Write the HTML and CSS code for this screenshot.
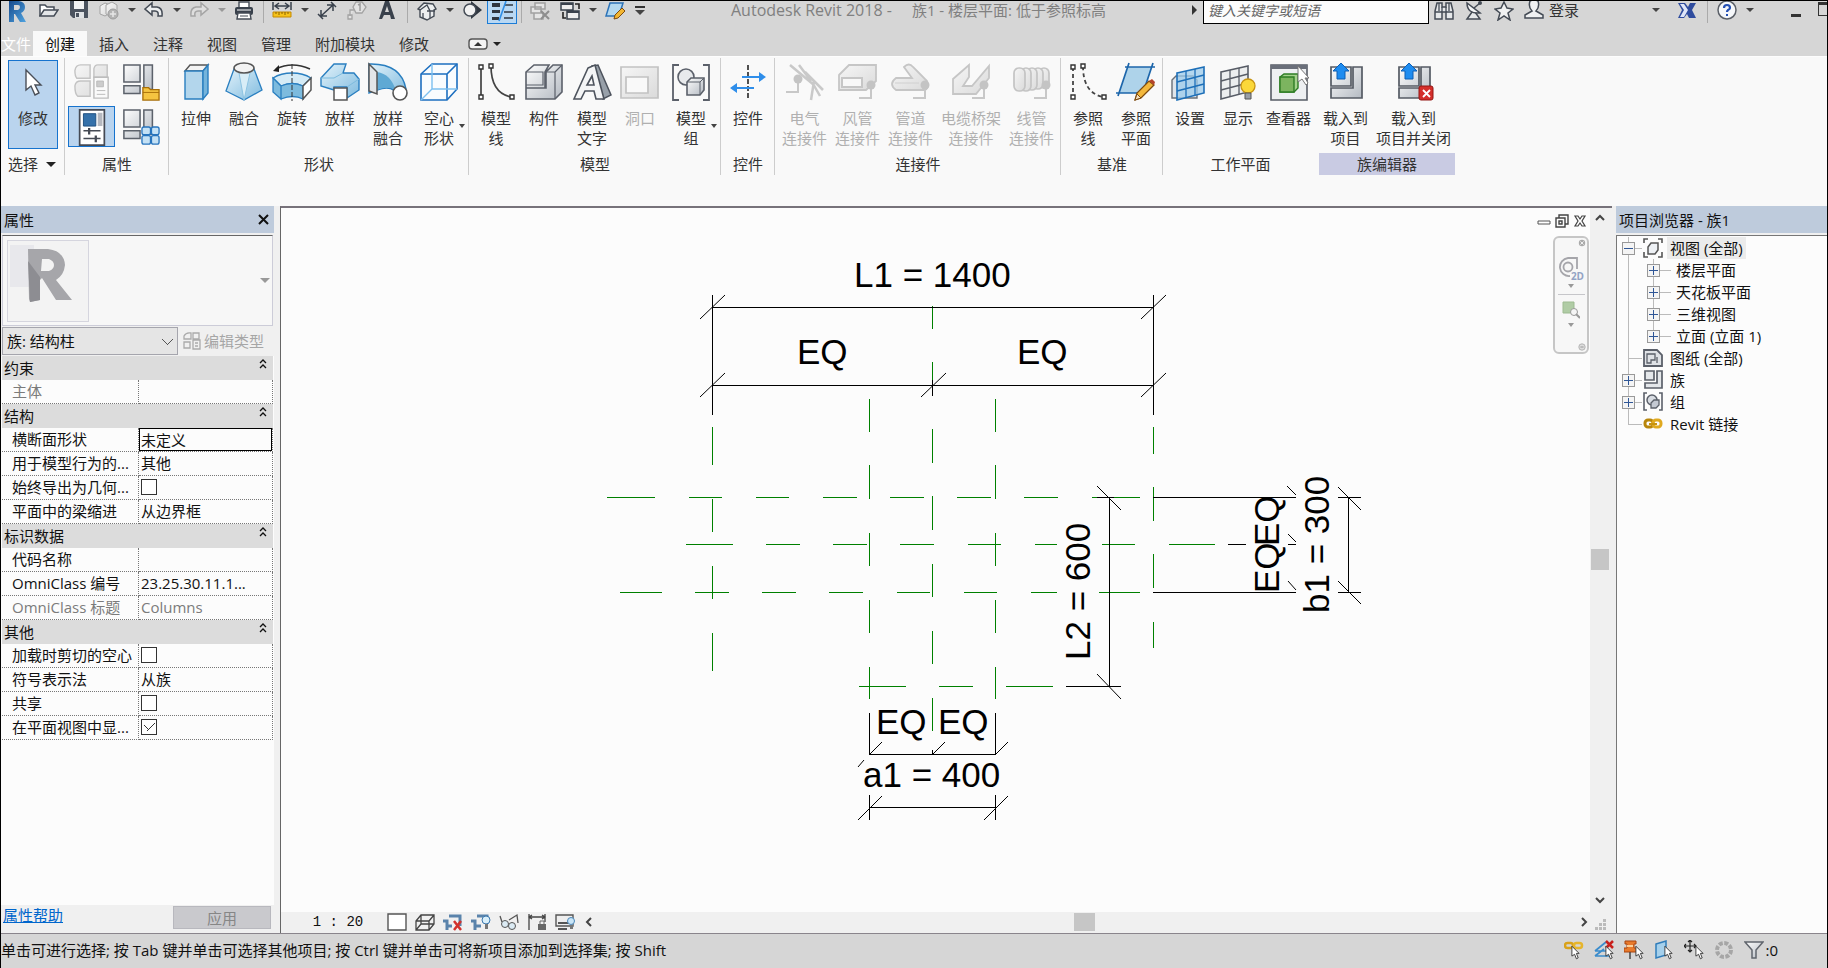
FILE: index.html
```html
<!DOCTYPE html>
<html lang="zh-CN">
<head>
<meta charset="utf-8">
<title>Autodesk Revit 2018 - 族1</title>
<link rel="stylesheet" href="styles.css">
</head>
<body>
<svg class="defs" aria-hidden="true">
  <defs>
    <linearGradient id="gs" x1="0" y1="0" x2="1" y2="1"><stop offset="0" stop-color="#fdfdfd"/><stop offset="1" stop-color="#b4bac2"/></linearGradient>
    <linearGradient id="gb" x1="0" y1="0" x2="1" y2="1"><stop offset="0" stop-color="#e2f2fa"/><stop offset="1" stop-color="#7fbbdf"/></linearGradient>
    <linearGradient id="gd" x1="0" y1="0" x2="1" y2="1"><stop offset="0" stop-color="#f6f6f6"/><stop offset="1" stop-color="#dadada"/></linearGradient>
    <linearGradient id="gr" x1="0" y1="0" x2="1" y2="1"><stop offset="0" stop-color="#174a8c"/><stop offset="1" stop-color="#4fa3e0"/></linearGradient>
    <symbol id="cursor" viewBox="0 0 10 16"><path d="M1 1v11l3-2 2 5 2-1-2-5h3z" fill="#fff" stroke="#333" stroke-width="1"/></symbol>
    <symbol id="elbow" viewBox="0 0 20 20"><path d="M1 18h12V6" fill="none" stroke="#c8c8c8" stroke-width="2"/><circle cx="13" cy="5" r="4.5" fill="#c4c4c4"/></symbol>
    <symbol id="blocks" viewBox="0 0 40 40"><path d="M2 2h17v18H2zM23 2h9v26H23zM2 24h17v8H2z" fill="url(#gs)" stroke="#5c626b" stroke-width="1.6"/></symbol>
    <symbol id="load" viewBox="0 0 40 40"><path d="M5 5h20v19H5zM27 5h9v31H5V26h22z" fill="url(#gs)" stroke="#555b64" stroke-width="1.7"/><path d="M15 1l8 8h-4v8h-8V9H7z" fill="#1e8cf0" stroke="#0d5fb5"/></symbol>
  </defs>
</svg>

<header class="titlebar">
  <nav class="quick" aria-label="快速访问工具栏">
    <button class="app" aria-label="应用程序菜单"><svg width="22" height="22" viewBox="0 0 22 22"><path fill-rule="evenodd" d="M3 0h10q6 1 6 6 0 4-4 6l5 9h-6l-5-8H8v8H3zM8 4v5h4q2-1 2-3t-2-2z" fill="url(#gr)"/></svg></button>
    <button class="qi" aria-label="打开"><svg viewBox="0 0 20 20"><path d="M1 15V4h5l2 2h7v3" fill="#fff" stroke="#444b55" stroke-width="1.5"/><path d="M1 15l4-6h14l-4 6z" fill="#e4e6e8" stroke="#444b55" stroke-width="1.5"/></svg></button>
    <button class="qi" aria-label="保存"><svg viewBox="0 0 20 20"><path d="M1 0h18v17H4l-3-3z" fill="#4b535f"/><path d="M5 0h10v8H5z" fill="#f2f3f4"/><path d="M6 11h9v6H6z" fill="#dfe2e5"/><path d="M7 12h3v4H7z" fill="#4b535f"/></svg></button>
    <button class="qi" aria-label="同步"><svg viewBox="0 0 20 20"><g fill="url(#gd)" stroke="#a3a3a3"><path d="M1 5l5-3 5 2v8l-5 3-5-2z"/><path d="M7 4l6-3 5 3v8l-6 4-5-3z"/></g><circle cx="14" cy="13" r="5" fill="#b4b4b4" stroke="#9c9c9c"/><path d="M11 13h6M14 10v6" stroke="#e6e6e6" stroke-width="1.5"/></svg></button>
    <button class="qc" aria-label="同步选项"><i class="caret"></i></button>
    <button class="qi" aria-label="放弃"><svg viewBox="0 0 20 20"><path d="M1 8l7-6v4h5q6 1 5 9h-4q1-5-3-5H8v4z" fill="#eceeef" stroke="#444b55" stroke-width="1.5"/></svg></button>
    <button class="qc" aria-label="放弃列表"><i class="caret"></i></button>
    <button class="qi" aria-label="重做"><svg viewBox="0 0 20 20"><path d="M19 8l-7-6v4H7q-6 1-5 9h4q-1-5 3-5h3v4z" fill="#dedede" stroke="#a5a5a5" stroke-width="1.5"/></svg></button>
    <button class="qc" aria-label="重做列表"><i class="caret soft"></i></button>
    <button class="qi" aria-label="打印"><svg viewBox="0 0 20 20"><path d="M5 1h10v6H5z" fill="#fff" stroke="#444b55" stroke-width="1.4"/><rect x="1" y="6" width="18" height="8" rx="2" fill="#39414c"/><path d="M3 9h14" stroke="#fff"/><path d="M4 12h12l1 6H3z" fill="#fff" stroke="#444b55" stroke-width="1.4"/><path d="M6 15h8" stroke="#444b55"/></svg></button>
    <span class="qs"></span>
    <button class="qi" aria-label="测量"><svg viewBox="0 0 20 20"><path d="M1 1v8M19 1v8M3 5h14M7 2L3 5l4 3M13 2l4 3-4 3" fill="none" stroke="#39414c" stroke-width="1.5"/><path d="M1 11h18v5H1z" fill="#f5c21b" stroke="#c58a00"/><path d="M4 11v2M7 11v3M10 11v2M13 11v3M16 11v2" stroke="#8a6100"/></svg></button>
    <button class="qc" aria-label="测量选项"><i class="caret"></i></button>
    <button class="qi" aria-label="对齐尺寸标注"><svg viewBox="0 0 20 20"><path d="M4 15L16 4M10 4h6v6M4 9v6h6M14 1l5 5M1 13l5 5" fill="none" stroke="#39414c" stroke-width="1.5"/></svg></button>
    <button class="qi" aria-label="按类别标记"><svg viewBox="0 0 20 20"><path d="M9 1h6l4 5-4 6H9L6 6zM7 9H3v6M1 14h4v4H1z" fill="#e2e2e2" stroke="#a3a3a3" stroke-width="1.3"/><path d="M11 4l2-1v7" fill="none" stroke="#999" stroke-width="1.4"/></svg></button>
    <button class="qi" aria-label="文字"><svg viewBox="0 0 20 20"><path fill-rule="evenodd" d="M8 0h4l6 18h-4l-1-4H7l-2 4H2zM10 5l-2 6h4z" fill="#39414c"/></svg></button>
    <span class="qs wide"></span>
    <button class="qi" aria-label="默认三维视图"><svg viewBox="0 0 20 20"><path d="M1 8l6-6 9 1 3 5-2 1v6l-7 4-7-3V9z" fill="#eceeef" stroke="#444b55" stroke-width="1.4"/><path d="M3 9l7-5 3 6v7M10 10h8M6 12v5" fill="none" stroke="#444b55" stroke-width="1.3"/></svg></button>
    <button class="qc" aria-label="三维视图选项"><i class="caret"></i></button>
    <button class="qi" aria-label="剖面"><svg viewBox="0 0 20 20"><path d="M9 0l11 9-11 9z" fill="#2f3640"/><circle cx="8" cy="9" r="6" fill="#f2f2f2" stroke="#444b55" stroke-width="1.5"/></svg></button>
    <button class="qi on" aria-label="细线"><svg viewBox="0 0 28 22"><path d="M4 2h8v4H4zM4 9h8v3H4zM4 16h7v3H4z" fill="#2f3640"/><path d="M16 4h9M16 11h9M16 17h9" stroke="#2f3640" stroke-width="1.5"/><path d="M18 0L11 20" stroke="#2f8ee6" stroke-width="1.6"/></svg></button>
    <span class="qs"></span>
    <button class="qi" aria-label="关闭隐藏窗口"><svg viewBox="0 0 20 20"><path d="M5 2h10v6H5zM1 6h10v6H1zM4 12h9v6H4z" fill="#e4e4e4" stroke="#a0a0a0" stroke-width="1.5"/><path d="M11 10l8 8M19 10l-8 8" stroke="#8e8e8e" stroke-width="2"/></svg></button>
    <button class="qi" aria-label="切换窗口"><svg viewBox="0 0 20 20"><path d="M1 2h12v7H1zM7 10h12v8H7z" fill="#eee" stroke="#39414c" stroke-width="1.5"/><path d="M1 3h12M7 11h12" stroke="#39414c" stroke-width="2"/><path d="M15 3h4v5M3 11v6h3" fill="none" stroke="#222" stroke-width="1.6"/></svg></button>
    <button class="qc" aria-label="切换窗口选项"><i class="caret"></i></button>
    <button class="qi" aria-label="参照平面"><svg viewBox="0 0 20 20"><path d="M5 2h13l-4 13H1z" fill="#b4d9f0" stroke="#2c73b8" stroke-width="1.5"/><path d="M9 18l1-4 7-7 3 3-7 7z" fill="#f2b632" stroke="#7d4b10"/></svg></button>
    <button class="qc custom" aria-label="自定义快速访问工具栏"><i class="bar"></i><i class="caret big"></i></button>
  </nav>
  <h1 class="doc"><span class="product">Autodesk Revit 2018 -</span><span>族1 - 楼层平面: 低于参照标高</span></h1>
  <div class="info">
    <button class="qc" aria-label="折叠搜索"><i class="play"></i></button>
    <input class="search" type="text" aria-label="搜索" placeholder="键入关键字或短语">
    <button class="qi" aria-label="查找"><svg viewBox="0 0 20 20"><path d="M3 2h5v4h4V2h5l2 8v8h-7v-7H8v7H1v-8z" fill="#e6e8ea" stroke="#444b55" stroke-width="1.5"/><path d="M1 11h7M12 11h7M8 6v5M12 6v5M5 2v8M15 2v8" stroke="#444b55" stroke-width="1.3"/></svg></button>
    <button class="qi" aria-label="通讯中心"><svg viewBox="0 0 20 20"><path d="M8 11l-5 7h13l-5-7z" fill="#e6e8ea" stroke="#444b55" stroke-width="1.5"/><path d="M3 2q0 11 13 10z" fill="#f4f5f6" stroke="#444b55" stroke-width="1.5"/><path d="M10 7l6-5" stroke="#444b55" stroke-width="1.5"/><circle cx="16" cy="2" r="2" fill="#444b55"/></svg></button>
    <button class="qi" aria-label="收藏夹"><svg viewBox="0 0 20 20"><path d="M10 1l3 6 6 1-5 4 2 7-6-4-6 4 2-7-5-4 6-1z" fill="#f0f1f2" stroke="#444b55" stroke-width="1.5"/></svg></button>
    <button class="login"><svg viewBox="0 0 20 20"><path d="M6 1q4-2 8 0 2 6-2 10l7 4v3H1v-3l7-4Q4 7 6 1z" fill="#f0f1f2" stroke="#444b55" stroke-width="1.5"/></svg><span>登录</span><i class="caret"></i></button>
    <button class="qi" aria-label="Exchange 应用程序"><svg viewBox="0 0 20 20"><path d="M1 2h7l3 4 2-4h6l-4 7 4 8h-7l-2-4-3 4H1l4-8z" fill="#2f4c9e"/><path d="M3 3h4l4 6-4 7H3l4-7z" fill="#dfe6f8"/></svg></button>
    <span class="qs wide"></span>
    <button class="qi" aria-label="帮助"><svg viewBox="0 0 20 20"><circle cx="10" cy="9" r="9" fill="#f6f8fb" stroke="#5b6068" stroke-width="1.5"/><path d="M7 7q0-3 3-3t3 3q0 1-2 2-1 1-1 2" fill="none" stroke="#2450b4" stroke-width="2.2"/><path d="M9 13h2v2H9z" fill="#2450b4"/></svg></button>
    <button class="qc" aria-label="帮助选项"><i class="caret"></i></button>
    <button class="min" aria-label="最小化"><i></i></button>
    <button class="max" aria-label="最大化"><i></i></button>
  </div>
</header>

<nav class="tabs" aria-label="功能区选项卡">
  <button class="tab file">文件</button>
  <button class="tab active">创建</button>
  <button class="tab">插入</button>
  <button class="tab">注释</button>
  <button class="tab">视图</button>
  <button class="tab">管理</button>
  <button class="tab">附加模块</button>
  <button class="tab">修改</button>
  <button class="collapse" aria-label="最小化功能区"><svg width="20" height="12" viewBox="0 0 20 12"><rect x="1" y="1" width="18" height="10" rx="3" fill="#f4f4f4" stroke="#555" stroke-width="1.4"/><path d="M6 8l4-4 4 4z" fill="#333"/></svg><i class="caret dark"></i></button>
</nav>

<div class="ribbon">
  <section class="panel select">
    <div class="tools"><button class="tool on"><svg viewBox="0 0 40 40"><path d="M13 8v20l5-4 4 9 4-2-4-8h6z" fill="#fff" stroke="#4a4f58" stroke-width="1.4"/></svg>修改</button></div>
    <h2>选择 <i class="caret dark big"></i></h2>
  </section>
  <section class="panel">
    <div class="grid4">
      <button aria-label="类型属性"><svg viewBox="0 0 40 40"><g fill="url(#gd)" stroke="#c3c3c3" stroke-width="1.5"><path d="M2 8q1-6 6-6h10v14H4q-2-2-2-8zM22 6q1-4 4-4h10v13H22zM2 24q1-5 6-5h10v16H5q-3-2-3-11z"/></g><path d="M22 15h15v22H22z" fill="#fafafa" stroke="#bdbdbd" stroke-width="1.5"/><path d="M25 19h7v6h-7zM25 29h9M25 33h9" fill="#ccc" stroke="#bbb"/></svg></button>
      <button aria-label="族类别和族参数"><svg viewBox="0 0 40 40"><use href="#blocks"/><path d="M22 26h6l2 2h9v11H22z" fill="#f5c440" stroke="#a86f08" stroke-width="1.4"/><path d="M22 31h17" stroke="#a86f08"/></svg></button>
      <button class="on" aria-label="属性"><svg viewBox="0 0 40 40"><path d="M7 2h26v37H7z" fill="#fff" stroke="#454a54" stroke-width="1.8"/><path d="M11 6h13v13H11z" fill="#3571aa" stroke="#1f4f80"/><path d="M26 5h5v14h-5z" fill="#b5b8bf"/><path d="M11 24h18M11 32h18" stroke="#454a54" stroke-width="1.6"/><path d="M17 21v7M24 29v7" stroke="#454a54" stroke-width="2.4"/></svg></button>
      <button aria-label="族类型"><svg viewBox="0 0 40 40"><use href="#blocks"/><g fill="#c4e1f5" stroke="#2774bd" stroke-width="1.4"><rect x="21" y="20" width="9" height="8" rx="2"/><rect x="31" y="20" width="8" height="8" rx="2"/><rect x="21" y="29" width="9" height="9" rx="2"/><rect x="31" y="29" width="8" height="9" rx="2"/></g></svg></button>
    </div>
    <h2>属性</h2>
  </section>
  <section class="panel">
    <div class="tools">
      <button class="tool"><svg viewBox="0 0 40 40"><path d="M9 9l5-6h18l-5 6z" fill="#f4f4f4" stroke="#555" stroke-width="1.4"/><path d="M9 9h18v28H9z" fill="#b3d6ec" stroke="#2a7fc0" stroke-width="1.4"/><path d="M27 9l5-6v28l-5 6z" fill="#75b4db" stroke="#2a7fc0" stroke-width="1.4"/></svg>拉伸</button>
      <button class="tool"><svg viewBox="0 0 40 40"><path d="M10 7L2 29l18 9 18-10L30 7z" fill="url(#gb)" stroke="#2a7fc0" stroke-width="1.3"/><path d="M15 11l5 27 6-27" fill="#d8edf7" stroke="#8cc3e2"/><ellipse cx="20" cy="6" rx="10" ry="5" fill="#f3f3f3" stroke="#555" stroke-width="1.5"/></svg>融合</button>
      <button class="tool"><svg viewBox="0 0 40 40"><path d="M1 16q8-5 19-5t19 5l-8 8q-10-5-22 0z" fill="#d5ebf6" stroke="#2a7fc0" stroke-width="1.3"/><path d="M1 16l8 8v13l-8-7zM9 24q11-5 22 0v13q-10-5-22 0z" fill="#7dbbde" stroke="#2a7fc0" stroke-width="1.3"/><path d="M31 24l8-8v12l-8 9z" fill="#fff" stroke="#555" stroke-width="1.5"/><path d="M20 2v37" stroke="#333" stroke-dasharray="5 2"/><path d="M4 7q16-8 34 0" fill="none" stroke="#333" stroke-width="1.6"/><path d="M1 9l6-6v7z" fill="#222"/></svg>旋转</button>
      <button class="tool"><svg viewBox="0 0 40 40"><path d="M1 16L14 2h12l-3 9h11l5 6v11l-12 8V25H14v3L1 24z" fill="url(#gb)" stroke="#2a7fc0" stroke-width="1.4"/><path d="M1 16h13l9-5M27 25l12-8" fill="none" stroke="#7dbbde"/><path d="M14 26h13v12H14z" fill="#fff" stroke="#555" stroke-width="1.5"/></svg>放样</button>
      <button class="tool"><svg viewBox="0 0 40 40"><path d="M1 2q32-1 37 25l-7 7q-6-12-22-6L1 31z" fill="url(#gb)" stroke="#2a7fc0" stroke-width="1.4"/><path d="M9 10q14 2 19 19-6-6-19-1z" fill="#5fa9d4"/><path d="M1 2l8 8v22l-8-3z" fill="#e2e5e8" stroke="#555" stroke-width="1.5"/><circle cx="32" cy="31" r="7" fill="#fff" stroke="#555" stroke-width="1.6"/></svg>放样<br>融合</button>
      <button class="tool drop"><svg viewBox="0 0 40 40"><path d="M2 12L13 2h25v25L28 38H2z" fill="#f9fcfe" stroke="#1d6fc0" stroke-width="1.6"/><path d="M2 12h26v26M28 12L38 2" fill="none" stroke="#1d6fc0" stroke-width="1.6"/><path d="M13 2v25h25M13 27L2 38" fill="none" stroke="#7cc0f0" stroke-width="1.4"/></svg>空心<br>形状<i class="caret"></i></button>
    </div>
    <h2>形状</h2>
  </section>
  <section class="panel">
    <div class="tools">
      <button class="tool"><svg viewBox="0 0 40 40"><path d="M5 5v29M15 4q0 27 20 31" fill="none" stroke="#444" stroke-width="1.7"/><path d="M3 3h4v4H3zM3 33h4v4H3zM13 2h4v4h-4zM34 33h4v4h-4z" fill="#fff" stroke="#333" stroke-width="1.4"/></svg>模型<br>线</button>
      <button class="tool"><svg viewBox="0 0 40 40"><path d="M2 10l8-7h15l-4 7v16H2zM22 10l7-7h9v27l-7 7H2V26h20z" fill="url(#gs)" stroke="#5b606a" stroke-width="1.6"/><path d="M2 10h17v13H2M22 10h9v27M31 10l7-7" fill="none" stroke="#5b606a" stroke-width="1.2"/></svg>构件</button>
      <button class="tool"><svg viewBox="0 0 40 40"><path d="M20 4l6-1 13 30-8 4z" fill="#98a0a9" stroke="#4d535d" stroke-width="1.5"/><path fill-rule="evenodd" d="M16 6l7-3 9 34h-8l-2-8h-9l-4 8H2zM20 14l-5 9h7z" fill="#f4f5f6" stroke="#4d535d" stroke-width="1.6"/></svg>模型<br>文字</button>
      <button class="tool" disabled><svg viewBox="0 0 40 40"><path fill-rule="evenodd" d="M1 5h37v31H1zM6 15v16h22V15z" fill="url(#gd)" stroke="#c2c2c2" stroke-width="1.7"/></svg>洞口</button>
      <button class="tool drop"><svg viewBox="0 0 40 40"><path d="M8 3H2v35h6M32 3h6v35h-6" fill="none" stroke="#5b606a" stroke-width="1.8"/><circle cx="15" cy="15" r="8" fill="#e8eaec" stroke="#5b606a" stroke-width="1.6"/><path d="M16 20l4-4h13v12l-4 5H16z" fill="url(#gs)" stroke="#5b606a" stroke-width="1.6"/><path d="M16 20h13v13M29 20l4-4" fill="none" stroke="#5b606a"/></svg>模型<br>组<i class="caret"></i></button>
    </div>
    <h2>模型</h2>
  </section>
  <section class="panel">
    <div class="tools"><button class="tool"><svg viewBox="0 0 40 40"><path d="M20 3v35" stroke="#333" stroke-width="1.7" stroke-dasharray="5 2"/><path d="M14 15h17M9 26h17" stroke="#2f8eea" stroke-width="2"/><path d="M31 10l7 5-7 5zM9 21l-7 5 7 5z" fill="#2f8eea"/></svg>控件</button></div>
    <h2>控件</h2>
  </section>
  <section class="panel">
    <div class="tools">
      <button class="tool" disabled><svg viewBox="0 0 40 40"><path d="M5 3l24 20M14 3l12 16M20 10l18 18M29 19l-3 19M27 20l8 14" stroke="#c9c9c9" stroke-width="2.5"/><use href="#elbow" x="0" y="12" width="20" height="20"/></svg>电气<br>连接件</button>
      <button class="tool" disabled><svg viewBox="0 0 40 40"><path d="M1 13l10-10h27v16L28 28H1z" fill="url(#gd)" stroke="#c6c6c6" stroke-width="1.8"/><path d="M4 16h20v9H4z" fill="#f8f8f8" stroke="#c6c6c6" stroke-width="2"/><use href="#elbow" x="20" y="18" width="20" height="20"/></svg>风管<br>连接件</button>
      <button class="tool" disabled><svg viewBox="0 0 40 40"><path d="M13 5q5-5 9 0l14 14q3 8-3 9H5q-8-6 0-12h16z" fill="url(#gd)" stroke="#c6c6c6" stroke-width="1.8"/><path d="M4 21h24" stroke="#d0d0d0"/><use href="#elbow" x="21" y="18" width="20" height="20"/></svg>管道<br>连接件</button>
      <button class="tool" disabled><svg viewBox="0 0 40 40"><path d="M2 27V17L18 3v12l-6 9h9L38 4v12L25 32H2z" fill="url(#gd)" stroke="#c6c6c6" stroke-width="1.8"/><use href="#elbow" x="20" y="18" width="20" height="20"/></svg>电缆桥架<br>连接件</button>
      <button class="tool" disabled><svg viewBox="0 0 40 40"><g fill="url(#gd)" stroke="#c4c4c4" stroke-width="1.7"><rect x="27" y="6" width="10" height="20" rx="5"/><rect x="21" y="6" width="10" height="21" rx="5"/><rect x="15" y="6" width="10" height="22" rx="5"/><rect x="9" y="6" width="10" height="23" rx="5"/><rect x="2" y="6" width="11" height="23" rx="5"/></g><use href="#elbow" x="21" y="18" width="20" height="20"/></svg>线管<br>连接件</button>
    </div>
    <h2>连接件</h2>
  </section>
  <section class="panel">
    <div class="tools">
      <button class="tool"><svg viewBox="0 0 40 40"><path d="M5 5v29M15 4q0 27 20 31" fill="none" stroke="#444" stroke-width="1.8" stroke-dasharray="4 3"/><path d="M3 3h4v4H3zM3 33h4v4H3zM13 2h4v4h-4zM34 33h4v4h-4z" fill="#fff" stroke="#333" stroke-width="1.4"/></svg>参照<br>线</button>
      <button class="tool"><svg viewBox="0 0 40 40"><path d="M12 5h24L27 31H3z" fill="#aed3ea"/><path d="M9 5h30M0 31h30M13 1L2 34M37 1L26 34" stroke="#1d66ab" stroke-width="1.7"/><path d="M19 38l2-7 12-12 5 4-13 13z" fill="#f3b83c" stroke="#7d4b10" stroke-width="1.3"/><path d="M33 19l5 4 1-3-3-3z" fill="#b5442b"/><path d="M19 38l2-6 4 4z" fill="#f6e0bd" stroke="#7d4b10"/></svg>参照<br>平面</button>
    </div>
    <h2>基准</h2>
  </section>
  <section class="panel last">
    <div class="tools">
      <button class="tool"><svg viewBox="0 0 40 40"><path d="M2 18l4-4h17l4 4v18H2z" fill="#dfe5ea" stroke="#6a7078" stroke-width="1.4"/><path d="M7 11l27-6v26L7 38z" fill="#9ccbeb" fill-opacity=".75" stroke="#1d6fb8" stroke-width="1.6"/><path d="M16 9v27M25 7v26M7 20l27-7M7 29l27-7" stroke="#1d6fb8" stroke-width="1.3"/></svg>设置</button>
      <button class="tool"><svg viewBox="0 0 40 40"><path d="M3 10l27-6v26L3 37z" fill="#eceeef" stroke="#575c66" stroke-width="1.6"/><path d="M12 8v27M21 6v26M3 19l27-7M3 28l27-7" stroke="#575c66" stroke-width="1.3"/><circle cx="30" cy="24" r="7" fill="#fbd83a" stroke="#c79413" stroke-width="1.3"/><path d="M27 31h6v6h-6z" fill="#999fa6" stroke="#555"/></svg>显示</button>
      <button class="tool"><svg viewBox="0 0 40 40"><path d="M2 3h36v35H2z" fill="#eef0f2" stroke="#575c66" stroke-width="1.6"/><path d="M2 3h36v4H2z" fill="#6a6f7a"/><path d="M11 15l4-3h14v14l-4 4H11z" fill="#a5d38d" stroke="#2e7d24" stroke-width="1.4"/><path d="M11 15h14v15H11z" fill="#7cb45f" stroke="#2e7d24" stroke-width="1.4"/><path d="M29 4v16l4-3 4 6 2-2-3-5h4z" fill="#fff" stroke="#777"/></svg>查看器</button>
    </div>
    <h2>工作平面</h2>
  </section>
  <section class="panel editor">
    <div class="tools">
      <button class="tool"><svg viewBox="0 0 40 40"><use href="#load"/></svg>载入到<br>项目</button>
      <button class="tool"><svg viewBox="0 0 40 40"><use href="#load"/><rect x="25" y="24" width="14" height="14" rx="2" fill="#d42f2b" stroke="#941714"/><path d="M29 28l7 7M36 28l-7 7" stroke="#fff" stroke-width="1.8"/></svg>载入到<br>项目并关闭</button>
    </div>
    <h2>族编辑器</h2>
  </section>
</div>

<main class="work">
  <aside class="props">
    <header class="phead"><h2>属性</h2><button aria-label="关闭"><svg width="12" height="12" viewBox="0 0 12 12"><path d="M1 1l9 9M10 1l-9 9" stroke="#111" stroke-width="2"/></svg></button></header>
    <button class="type" aria-label="类型选择器"><span class="thumb"><svg viewBox="0 0 80 80"><path d="M2 4h24v42H2z" fill="#e8e8ec"/><path fill-rule="evenodd" d="M20 8h20q16 2 17 16-1 10-9 15l16 20H48L34 37l-2 2v20l-10 2-1-3zM34 18l-1 12h8q5-2 5-6t-5-6z" fill="#a6a6aa"/><path d="M20 20l12 16v23l-10 2z" fill="#8d8d92"/></svg></span><i class="caret soft big"></i></button>
    <div class="filter">
      <select aria-label="属性过滤器"><option>族: 结构柱</option></select>
      <button disabled><svg width="18" height="18" viewBox="0 0 18 18"><path d="M1 4q2-4 7-3v6H1zM10 1h6v6h-6zM1 10h6v6H1zM10 8h7v9h-7zM12 11h3M12 14h3" fill="none" stroke="#aaa" stroke-width="1.3"/></svg>编辑类型</button>
    </div>
    <div class="sheet">
      <table>
        <colgroup><col class="c1"><col></colgroup>
        <tr class="group"><th colspan="2">约束<button aria-label="折叠约束"><svg><use href="#chev"/></svg></button></th></tr>
        <tr class="dim"><th>主体</th><td></td></tr>
        <tr class="group"><th colspan="2">结构<button aria-label="折叠结构"><svg><use href="#chev"/></svg></button></th></tr>
        <tr><th><label for="p1">横断面形状</label></th><td class="edit"><input id="p1" type="text" value="未定义"></td></tr>
        <tr><th>用于模型行为的...</th><td>其他</td></tr>
        <tr><th><label for="p2">始终导出为几何...</label></th><td><input id="p2" type="checkbox"></td></tr>
        <tr><th>平面中的梁缩进</th><td>从边界框</td></tr>
        <tr class="group"><th colspan="2">标识数据<button aria-label="折叠标识数据"><svg><use href="#chev"/></svg></button></th></tr>
        <tr><th>代码名称</th><td></td></tr>
        <tr><th>OmniClass 编号</th><td>23.25.30.11.1...</td></tr>
        <tr class="dim"><th>OmniClass 标题</th><td>Columns</td></tr>
        <tr class="group"><th colspan="2">其他<button aria-label="折叠其他"><svg><use href="#chev"/></svg></button></th></tr>
        <tr><th><label for="p3">加载时剪切的空心</label></th><td><input id="p3" type="checkbox"></td></tr>
        <tr><th>符号表示法</th><td>从族</td></tr>
        <tr><th><label for="p4">共享</label></th><td><input id="p4" type="checkbox"></td></tr>
        <tr><th><label for="p5">在平面视图中显...</label></th><td><input id="p5" type="checkbox" checked></td></tr>
      </table>
    </div>
    <footer class="pfoot"><a href="#help">属性帮助</a><button disabled>应用</button></footer>
  </aside>
  <svg class="defs" aria-hidden="true"><symbol id="chev" viewBox="0 0 8 10"><path d="M1 4l3-3 3 3M1 9l3-3 3 3" fill="none" stroke="#111" stroke-width="1.3"/></symbol></svg>

  <section class="view">
    <div class="canvas">
      <svg class="drawing" role="img" aria-label="楼层平面: 低于参照标高">
        <g transform="translate(-281 -208)">
          <g class="ref">
            <path d="M932.500 306v23M932.500 362v23M932.500 429v34M932.500 496v34M932.500 564v33M932.500 631v33M932.500 698v33"/>
            <path d="M712.500 427v38M712.500 499v33M712.500 566v33M712.500 633v38"/>
            <path d="M869.500 399v33M869.500 465v34M869.500 533v33M869.500 600v33M869.500 667v32"/>
            <path d="M995.500 399v33M995.500 465v34M995.500 533v33M995.500 600v33M995.500 667v32"/>
            <path d="M1153.500 427v27M1153.500 487v34M1153.500 554v34M1153.500 622v26"/>
            <path d="M607 497.500h48M689 497.500h33M756 497.500h33M823 497.500h34M890 497.500h34M957 497.500h34M1024 497.500h34M1092 497.500h48"/>
            <path d="M686 544.500h47M766 544.500h34M833 544.500h34M900 544.500h34M968 544.500h33M1035 544.500h22M1102 544.500h33M1169 544.500h46"/>
            <path d="M620 592.500h42M695 592.500h34M762 592.500h34M829 592.500h34M897 592.500h33M964 592.500h33M1031 592.500h26M1099 592.500h41"/>
            <path d="M859 686.500h47M939 686.500h34M1006 686.500h47"/>
          </g>
          <g class="dimline">
            <path d="M712 307.500h442M712 385.500h442M712.500 295v120M1153.500 295v120M932.500 380v16"/>
            <path d="M1097 497.500h17M1153 497.500h143M1228 544.500h18M1288 544.500h8M1153 592.500h143M1066 686.500h55M1109.500 497v190"/>
            <path d="M1348.500 497v96M1338 497.500h23M1338 592.500h23"/>
            <path d="M869.500 713v42M995.500 713v42M869 754.500h127M932.500 750v5M869 807.500h127M869.500 795v25M995.500 795v25"/>
          </g>
          <g class="tick">
            <path d="M700 319l25-24M1141 319l25-24M700 397l25-24M921 397l25-24M1141 397l25-24"/>
            <path d="M1097 486l24 24M1097 674l24 25M1287 486l9 9M1288 534l8 8M1288 581l8 9M1338 487l23 23M1338 581l23 23"/>
            <path d="M870 754l12-12M933 754l12-12M996 754l12-12M858 767l6-7M858 820l24-24M984 820l24-24"/>
          </g>
          <g class="note">
            <text x="854" y="287">L1 = 1400</text>
            <text x="797" y="364">EQ</text>
            <text x="1017" y="364">EQ</text>
            <text x="876" y="734">EQ</text>
            <text x="938" y="734">EQ</text>
            <text x="863" y="787">a1 = 400</text>
            <text transform="translate(1090 660) rotate(-90)">L2 = 600</text>
            <text transform="translate(1279 593) rotate(-90)">EQ</text>
            <text transform="translate(1279 546) rotate(-90)">EQ</text>
            <text transform="translate(1329 613) rotate(-90)">b1 = 300</text>
          </g>
        </g>
      </svg>
      <div class="mdi">
        <button aria-label="最小化视图"><svg viewBox="0 0 14 14"><path d="M1 7h12v3H1z" fill="#fff" stroke="#555"/></svg></button>
        <button aria-label="还原视图"><svg viewBox="0 0 14 14"><path d="M4 4V1h9v9h-3M1 4h9v9H1zM4 7h3v3H4z" fill="none" stroke="#444" stroke-width="1.4"/></svg></button>
        <button aria-label="关闭视图"><svg viewBox="0 0 14 14"><path d="M2 2h3l2 3 2-3h3L9 7l3 5H9L7 9l-2 3H2l3-5z" fill="#fff" stroke="#444" stroke-width="1.2"/></svg></button>
      </div>
      <div class="navbar">
        <button class="corner" aria-label="关闭导航栏"><svg viewBox="0 0 10 10"><circle cx="5" cy="5" r="4" fill="#aaa"/><path d="M3 3l4 4M7 3L3 7" stroke="#fff"/></svg></button>
        <button class="wheel" aria-label="二维控制盘"><svg viewBox="0 0 20 20"><path d="M19 12V1h-9a9 9 0 1 0 2 18" fill="none" stroke="#a5a5aa" stroke-width="1.8"/><circle cx="10" cy="10" r="4.500" fill="none" stroke="#a5a5aa" stroke-width="1.8"/></svg><b>2D</b></button>
        <button class="nc" aria-label="控制盘选项"><i class="caret soft"></i></button>
        <hr>
        <button aria-label="区域放大"><svg class="zoomer" viewBox="0 0 18 18"><path d="M1 1h11v11H1z" fill="#b0cca5" stroke="#9dbb91"/><circle cx="12" cy="11" r="3.500" fill="#f5f5f5" stroke="#999"/><path d="M14 13l4 4" stroke="#999" stroke-width="2"/></svg></button>
        <button class="nc" aria-label="缩放选项"><i class="caret soft"></i></button>
        <button class="corner low" aria-label="自定义导航栏"><svg viewBox="0 0 10 10"><circle cx="5" cy="5" r="4" fill="#ddd" stroke="#aaa"/><path d="M3 5h4" stroke="#888"/></svg></button>
      </div>
    </div>
    <div class="vscroll">
      <button aria-label="向上滚动"><svg viewBox="0 0 12 12"><path d="M2 8l4-4 4 4" fill="none" stroke="#444" stroke-width="2"/></svg></button>
      <i class="thumb-v"></i>
      <button aria-label="向下滚动"><svg viewBox="0 0 12 12"><path d="M2 4l4 4 4-4" fill="none" stroke="#444" stroke-width="2"/></svg></button>
    </div>
    <div class="viewbar">
      <button class="scale">1 : 20</button>
      <button aria-label="详细程度"><svg viewBox="0 0 20 18"><path d="M1 1h18v16H1z" fill="#fff" stroke="#555" stroke-width="1.4"/></svg></button>
      <button aria-label="视觉样式"><svg viewBox="0 0 20 18"><path d="M1 8l5-6h13v9l-5 6H1zM1 8h13v9M14 8l5-6M6 2v9h13M6 11l-5 6" fill="none" stroke="#444" stroke-width="1.3"/></svg></button>
      <button aria-label="裁剪视图"><svg viewBox="0 0 20 18"><path d="M4 17V8H0M6 3h11v10M4 13h5" fill="none" stroke="#5a83ab" stroke-width="3"/><path d="M11 8l7 9M18 8l-7 9" stroke="#d2322d" stroke-width="2.5"/></svg></button>
      <button aria-label="显示裁剪区域"><svg viewBox="0 0 20 18"><path d="M4 17V8H0M6 3h10v8M4 13h6" fill="none" stroke="#5a83ab" stroke-width="3"/><circle cx="15" cy="7" r="4" fill="#d9effa" stroke="#3c78ae"/><path d="M14 11h3v5h-3z" fill="#777"/></svg></button>
      <button aria-label="临时隐藏/隔离"><svg viewBox="0 0 20 18"><path d="M1 3l2 6M10 7l8-5 1 8" fill="none" stroke="#555" stroke-width="1.3"/><circle cx="6" cy="11" r="3.500" fill="#dcebf4" stroke="#555"/><circle cx="13" cy="13" r="3.500" fill="#dcebf4" stroke="#555"/></svg></button>
      <button aria-label="显示约束"><svg viewBox="0 0 20 18"><path d="M2 1v16M18 1v8M2 4h16M5 2L2 4l3 2M15 2l3 2-3 2" fill="none" stroke="#444" stroke-width="1.3"/><path d="M11 11h8v6h-8z" fill="#666"/><path d="M13 11V8h4v3" fill="none" stroke="#666"/></svg></button>
      <button aria-label="预览可见性"><svg viewBox="0 0 20 18"><path d="M1 2h17v11H1z" fill="#eee" stroke="#555" stroke-width="1.4"/><path d="M3 10h12M3 16h9" stroke="#555" stroke-width="2"/><circle cx="16" cy="8" r="3.500" fill="#c9e5f7" stroke="#4a86b8"/><path d="M15 12h3v4h-3z" fill="#777"/></svg></button>
      <button class="arrow" aria-label="向左滚动"><svg viewBox="0 0 12 12"><path d="M8 2L4 6l4 4" fill="none" stroke="#444" stroke-width="2"/></svg></button>
      <div class="htrack"><i class="thumb-h"></i></div>
      <button class="arrow" aria-label="向右滚动"><svg viewBox="0 0 12 12"><path d="M4 2l4 4-4 4" fill="none" stroke="#444" stroke-width="2"/></svg></button>
    </div>
    <div class="grip"><svg width="12" height="12" viewBox="0 0 12 12"><path d="M8 0h3v3H8zM8 4h3v3H8zM4 4h3v3H4zM8 8h3v3H8zM4 8h3v3H4zM0 8h3v3H0z" fill="#bbb"/></svg></div>
  </section>

  <aside class="browser">
    <header class="phead"><h2>项目浏览器 - 族1</h2></header>
    <ul class="tree">
      <li class="root"><button class="tg minus" aria-label="折叠"></button><svg viewBox="0 0 20 20"><path d="M5 1H1v4M15 1h4v4M1 14v5h4M19 14v5h-4" fill="none" stroke="#555" stroke-width="1.6"/><path d="M5 9l3-4h7v7l-3 4H5z" fill="#eef1f5" stroke="#555" stroke-width="1.5"/></svg><span class="sel">视图 (全部)</span>
        <ul>
          <li><button class="tg" aria-label="展开"></button><span>楼层平面</span></li>
          <li><button class="tg" aria-label="展开"></button><span>天花板平面</span></li>
          <li><button class="tg" aria-label="展开"></button><span>三维视图</span></li>
          <li><button class="tg" aria-label="展开"></button><span>立面 (立面 1)</span></li>
        </ul>
      </li>
      <li class="root"><i class="nt"></i><svg viewBox="0 0 20 20"><path d="M1 2h13l5 5v11H1z" fill="#dfe2e6" stroke="#5b606a" stroke-width="1.8"/><path d="M4 6h8v6H8v3H4zM14 9v6" fill="none" stroke="#5b606a" stroke-width="1.3"/></svg><span>图纸 (全部)</span></li>
      <li class="root"><button class="tg" aria-label="展开"></button><svg viewBox="0 0 20 20"><path d="M2 1h9v9H2zM14 1h5v17H2v-5h12z" fill="#e4e7ea" stroke="#5b606a" stroke-width="1.7"/></svg><span>族</span></li>
      <li class="root"><button class="tg" aria-label="展开"></button><svg viewBox="0 0 20 20"><path d="M4 1H1v17h3M16 1h3v17h-3" fill="none" stroke="#5b606a" stroke-width="1.6"/><circle cx="9" cy="8" r="5" fill="#d8dce2" stroke="#5b606a" stroke-width="1.5"/><path d="M8 11l3-3h5v5l-3 3H8z" fill="#c4c9d2" stroke="#5b606a" stroke-width="1.3"/></svg><span>组</span></li>
      <li class="root end"><i class="nt"></i><svg viewBox="0 0 20 20"><rect x="2" y="6" width="8" height="7" rx="3" fill="none" stroke="#b8860b" stroke-width="3"/><rect x="10" y="6" width="8" height="7" rx="3" fill="none" stroke="#e0a91f" stroke-width="3"/><path d="M6 10h8" stroke="#c7930f" stroke-width="2"/></svg><span>Revit 链接</span></li>
    </ul>
  </aside>
</main>

<footer class="status">
  <p>单击可进行选择; 按 Tab 键并单击可选择其他项目; 按 Ctrl 键并单击可将新项目添加到选择集; 按 Shift</p>
  <div class="sicons">
    <button aria-label="选择链接"><svg viewBox="0 0 20 20"><rect x="1" y="3" width="8" height="5" rx="2.500" fill="none" stroke="#d9a21b" stroke-width="2.500"/><rect x="10" y="3" width="8" height="5" rx="2.500" fill="none" stroke="#e6b52c" stroke-width="2.500"/><use href="#cursor" x="7" y="5" width="9" height="15"/></svg></button>
    <button aria-label="选择基线图元"><svg viewBox="0 0 20 20"><path d="M1 11L12 2M1 11h14M1 16L10 9M1 16h14" fill="none" stroke="#3a8ccc" stroke-width="1.7"/><path d="M12 1l7 7M19 1l-7 7" stroke="#c8201c" stroke-width="2.500"/><use href="#cursor" x="11" y="5" width="9" height="15"/></svg></button>
    <button aria-label="选择锁定图元"><svg viewBox="0 0 20 20"><path d="M1 1h11v3h-2v4h3v4H0V8h3V4H1z" fill="#e87a2c" stroke="#a84510"/><path d="M3 6h6" stroke="#fbd09a" stroke-width="2"/><path d="M6 12v7" stroke="#444" stroke-width="1.5"/><use href="#cursor" x="11" y="5" width="9" height="15"/></svg></button>
    <button aria-label="按面选择图元"><svg viewBox="0 0 20 20"><path d="M2 4l10-3v14L2 18z" fill="#a5d0ec" stroke="#2f7dbb" stroke-width="1.5"/><use href="#cursor" x="10" y="5" width="9" height="15"/></svg></button>
    <button aria-label="选择时拖曳图元"><svg viewBox="0 0 20 20"><path d="M6 0v12M0 6h12M4 2l2-2 2 2M4 10l2 2 2-2M2 4L0 6l2 2M10 4l2 2-2 2" fill="none" stroke="#222" stroke-width="1.2"/><use href="#cursor" x="11" y="5" width="9" height="15"/></svg></button>
    <button aria-label="后台进程"><svg viewBox="0 0 20 20"><circle cx="10" cy="10" r="7" fill="none" stroke="#a6a6a6" stroke-width="4" stroke-dasharray="4 1.500"/></svg></button>
    <button class="sel-count" aria-label="过滤器"><svg viewBox="0 0 20 20"><path d="M1 2h18l-7 8v8H8v-8z" fill="url(#gs)" stroke="#60656d" stroke-width="1.5"/></svg>:0</button>
  </div>
</footer>
</body>
</html>
```
FILE: styles.css
```css
* { box-sizing: border-box; }
body {
  margin: 0;
  min-height: 100vh;
  display: flex;
  flex-direction: column;
  background: #d6d6d6;
  border: 1px solid #000;
  border-bottom: 0;
  color: #111;
  font: 15px/20px "Open Sans", "Noto Sans CJK SC", sans-serif;
}
button, input, select { font: inherit; color: inherit; margin: 0; padding: 0; border: 0; background: none; }
h1, h2, p, ul { margin: 0; padding: 0; font-size: 15px; font-weight: 400; list-style: none; }
svg { display: block; }
.defs { position: absolute; width: 0; height: 0; }

.caret { display: inline-block; border: 4px solid transparent; border-top-color: #444; border-bottom: 0; }
.caret.big { border-width: 5px 5px 0; }
.caret.dark { border-top-color: #222; }
.caret.soft { border-top-color: #999; }
.play { border: 5px solid transparent; border-left-color: #333; border-right: 0; }

/* title bar */
.titlebar { display: flex; height: 23px; color: #333; white-space: nowrap; }
.quick, .info { display: flex; align-items: flex-start; flex: none; }
.app { width: 33px; padding-left: 5px; }
.qi { width: 30px; display: flex; justify-content: center; }
.qi svg, .login svg { width: 20px; height: 20px; }
.qi.on { background: #b9d8f3; border: 1px solid #1c7cd6; border-top: 0; }
.qi.on svg { width: 28px; height: 22px; }
.qc { width: 15px; height: 18px; display: flex; flex-direction: column; align-items: center; justify-content: center; gap: 2px; }
.qc.custom { width: 20px; }
.bar { width: 10px; height: 2px; background: #333; }
.qs { width: 8px; height: 22px; background: linear-gradient(#aaa, #aaa) center / 1px 100% no-repeat; }
.qs.wide { width: 10px; }
.doc { flex: 1; min-width: 0; padding-left: 81px; line-height: 18px; color: #808080; display: flex; gap: 20px; }
.product { font-size: 16px; }
.search { width: 226px; height: 23px; margin-left: 1px; padding: 0 4px 4px; background: #fcfcfc; border: 1px solid #000; border-top: 0; font-size: 14px; font-style: italic; }
.search::placeholder { color: #666; opacity: 1; }
.login { display: flex; align-items: center; height: 18px; width: 153px; padding-left: 5px; }
.login span { margin-left: 5px; flex: 1; text-align: left; }
.login .caret { margin-right: 12px; }
.min { width: 60px; height: 18px; padding: 10px 0 0 34px; }
.min i { display: block; width: 10px; height: 3px; background: #333; }
.max { width: 10px; height: 15px; overflow: hidden; }
.max i { display: block; width: 18px; height: 14px; margin-left: 1px; border: 1px solid #333; border-top-width: 3px; }

/* tabs */
.tabs { display: flex; align-items: flex-end; height: 32px; color: #333; }
.tab { height: 25px; padding: 0 12px; }
.tab.file { padding: 0 2px 0 0; color: #fff; }
.tab.active { background: #f9f9f9; color: #111; }
.collapse { display: flex; align-items: center; gap: 5px; height: 25px; margin-left: 27px; }

/* ribbon */
.ribbon { display: flex; align-items: flex-start; min-height: 150px; padding-top: 1px; background: #f9f9f9; border-top: 1px solid #fdfdfd; color: #333; white-space: nowrap; }
.panel { padding: 2px 2px 0 3px; border-right: 1px solid #cdcdcd; }
.panel h2 { height: 22px; line-height: 22px; text-align: center; }
.panel.last { border-right: 0; }
.panel.editor { margin-left: 2px; padding: 2px 0 0; border: 0; }
.editor h2 { background: #c9cbe3; }
.panel.select { padding: 2px 6px 0 7px; }
.select h2 { display: flex; align-items: center; gap: 8px; }
.tools { display: flex; align-items: flex-start; min-height: 93px; }
.tool { position: relative; min-width: 48px; padding: 2px 4px 0; }
.tool svg { width: 40px; height: 40px; margin: 0 auto 6px; }
.tool:disabled { color: #b0b0b0; }
.tool.drop { width: 54px; }
.tool .caret { position: absolute; right: 1px; top: 64px; border-width: 4px 3px 0; }
.tool.on, .grid4 .on { background: #bad4ee; border: 1px solid #1673ce; }
.tool.on { padding: 1px 4px 20px; }
.grid4 { display: grid; grid-template-columns: 47px 47px; grid-auto-rows: 41px; gap: 4px 2px; min-height: 93px; padding: 1px 2px 0 0; }
.grid4 button { display: flex; align-items: center; justify-content: center; }
.grid4 svg { width: 38px; height: 38px; }

/* work area */
.work { flex: 1; display: flex; background: #f0f0f0; }
.phead { display: flex; align-items: center; justify-content: space-between; height: 27px; padding: 0 2px 0 3px; background: #becbdc; }
.phead button { padding: 0 2px; }
.props { width: 273px; margin-right: 6px; display: flex; flex-direction: column; flex: none; }
.type { display: flex; align-items: center; justify-content: space-between; height: 91px; margin: 2px 1px 0 1px; padding: 0 2px 0 4px; background: #f7f7f7; border: 1px solid #ccccd8; border-top: 1px solid #666; }
.thumb { width: 82px; height: 82px; border: 1px solid #d5d5de; background: #f3f3f3; }
.thumb svg { width: 80px; height: 80px; }
.filter { display: flex; align-items: center; height: 30px; padding-left: 1px; gap: 5px; }
.filter select { width: 176px; height: 28px; padding: 0 4px; appearance: none; border: 1px solid #a5a5ad; color: #111;
  background: linear-gradient(45deg, transparent 44%, #555 44%, #555 56%, transparent 56%) 159px 11px / 6px 6px no-repeat, linear-gradient(-45deg, transparent 44%, #555 44%, #555 56%, transparent 56%) 164px 11px / 6px 6px no-repeat, #e5e5e5; }
.filter button { display: flex; align-items: center; gap: 3px; color: #a6a6a6; }
.sheet { flex: 1; background: #fcfcfc; }
table { width: 271px; margin-left: 1px; table-layout: fixed; border-spacing: 0; }
.c1 { width: 137px; }
th, td { height: 24px; padding: 0 0 1px 10px; font-weight: 400; text-align: left; line-height: 20px; white-space: nowrap; border-bottom: 1px dotted #777; border-right: 1px dotted #777; }
td { padding-left: 2px; }
.group th { padding-left: 2px; background: #dcdcdc; border: 0; }
.group button { float: right; margin-right: 6px; }
.group svg { width: 8px; height: 12px; }
.dim { color: #7b7b7b; }
td.edit { padding: 0; }
.edit input { display: block; width: 100%; height: 23px; padding: 0 1px; border: 1px solid #000; }
td input[type="checkbox"] { display: block; appearance: none; width: 16px; height: 16px; border: 1px solid #333; background: #fff; }
td input[type="checkbox"]:checked { background: linear-gradient(45deg, transparent 42%, #333 42%, #333 58%, transparent 58%) 2px 5px / 5px 5px no-repeat, linear-gradient(-45deg, transparent 44%, #333 44%, #333 56%, transparent 56%) 5px 3px / 8px 8px no-repeat, #fff; }
.pfoot { display: flex; justify-content: space-between; height: 28px; padding: 1px 3px 4px 2px; }
.pfoot a { color: #0066cc; line-height: 18px; }
.pfoot button { width: 98px; background: #c9c9cd; border: 1px solid #b8b8be; color: #868686; }

/* drawing window */
.view { flex: 1; min-width: 0; display: grid; grid-template: 1fr 21px / 1fr 22px; border-left: 1px solid #666; border-top: 2px solid #77727a; }
.canvas { position: relative; background: #fcfcfc; overflow: hidden; }
.drawing { position: absolute; width: 100%; height: 100%; }
.ref path { stroke: #008000; fill: none; shape-rendering: crispEdges; }
.dimline path { stroke: #000; fill: none; shape-rendering: crispEdges; }
.tick path { stroke: #000; fill: none; }
.note text { font: 35px "Liberation Sans", sans-serif; fill: #000; white-space: pre; }
.mdi { position: absolute; top: 6px; right: 3px; display: flex; gap: 4px; }
.mdi svg { width: 14px; height: 14px; }
.navbar { position: absolute; top: 28px; right: 1px; width: 36px; height: 118px; display: flex; flex-direction: column; align-items: center; background: #f7f7f7; border: 2px solid #c6c6c6; border-radius: 6px; }
.corner { align-self: flex-end; padding: 1px; }
.corner svg { width: 8px; height: 8px; }
.corner.low { margin-top: auto; }
.wheel { width: 26px; margin-top: 9px; line-height: 8px; }
.wheel svg { width: 20px; height: 20px; }
.wheel b { display: block; margin-top: -5px; font-size: 10px; text-align: right; color: #93a3c4; }
.zoomer { width: 18px; height: 18px; }
.nc { height: 12px; display: flex; align-items: center; }
.nc .caret { border-width: 4px 3px 0; }
.navbar hr { width: 27px; margin: 2px 0 6px; border: 0; border-top: 1px solid #c6c6ca; }
.vscroll { display: flex; flex-direction: column; align-items: center; justify-content: space-between; padding: 4px 2px 6px 0; }
.vscroll svg, .arrow svg { width: 12px; height: 12px; }
.thumb-v { width: 18px; height: 21px; background: #c6c6c6; }
.viewbar { display: flex; align-items: center; gap: 8px; padding-bottom: 2px; }
.viewbar svg { width: 20px; height: 18px; }
.scale { width: 82px; margin-left: 16px; font: 14px/18px "Liberation Mono", monospace; }
.viewbar .arrow svg { width: 12px; height: 12px; }
.htrack { flex: 1; display: flex; justify-content: center; }
.thumb-h { width: 21px; height: 18px; background: #c6c6c6; margin-right: 5px; }
.grip { display: flex; align-items: flex-end; justify-content: center; padding: 0 0 2px; }

/* project browser */
.browser { width: 211px; margin-left: 4px; display: flex; flex-direction: column; flex: none; }
.tree { line-height: 22px; white-space: nowrap; }
.browser > .tree { flex: 1; margin-top: 2px; padding: 1px 0 0 5px; background: #fcfcfc; border-left: 1px solid #777; border-top: 1px solid #777; }
.root { display: grid; grid-template-columns: 21px 20px 1fr; align-items: center; background: linear-gradient(#bbb, #bbb) 6px 0 / 1px 100% no-repeat, linear-gradient(#bbb, #bbb) 6px 11px / 14px 1px no-repeat; }
.root.end { background-size: 1px 11px, 14px 1px; }
.root > svg { width: 20px; height: 20px; }
.root > span { justify-self: start; height: 22px; margin-left: 4px; padding: 0 3px; }
.root > .sel { background: #ebebeb; }
.root > ul { grid-column: 1 / -1; padding-left: 25px; }
.root li { display: flex; align-items: center; height: 22px; gap: 16px; background: linear-gradient(#bbb, #bbb) 6px 0 / 1px 100% no-repeat, linear-gradient(#bbb, #bbb) 6px 11px / 18px 1px no-repeat; }
.root li:last-child { background-size: 1px 11px, 18px 1px; }
.tg { width: 13px; height: 13px; border: 1px solid #999; background: linear-gradient(#2f5696, #2f5696) center / 9px 1px no-repeat, linear-gradient(#2f5696, #2f5696) center / 1px 9px no-repeat, #f4f4f4; }
.tg.minus { background: linear-gradient(#2f5696, #2f5696) center / 9px 1px no-repeat, #f4f4f4; }

/* status bar */
.status { display: flex; align-items: center; justify-content: space-between; height: 35px; padding: 0 49px 2px 0; border-top: 1px solid #8a858c; white-space: nowrap; }
.sicons { display: flex; gap: 10px; }
.sicons svg { width: 20px; height: 20px; }
.sel-count { display: flex; align-items: center; gap: 1px; }
```
